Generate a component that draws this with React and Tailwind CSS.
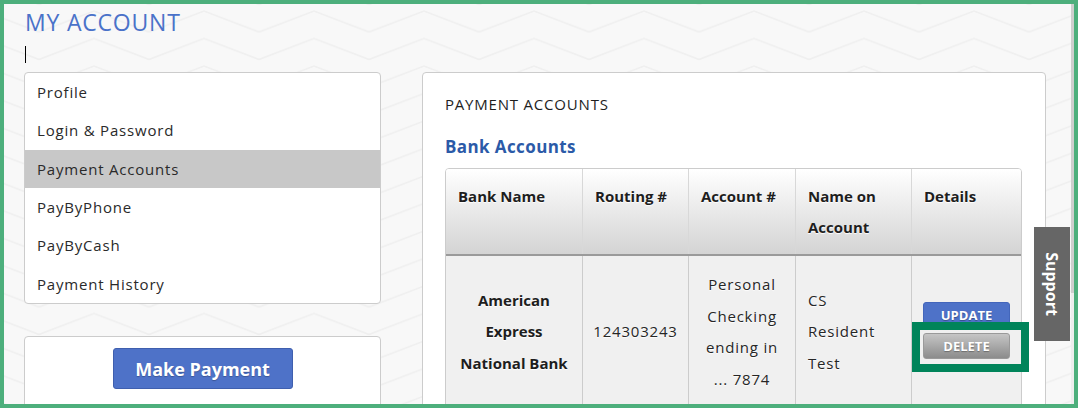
import React from "react";

const menu = ["Profile", "Login & Password", "Payment Accounts", "PayByPhone", "PayByCash", "Payment History"];

function Background() {
  return (
    <svg className="absolute inset-0 w-full h-full" aria-hidden="true">
      <defs>
        <pattern id="zig" x="35" y="4" width="110" height="27.5" patternUnits="userSpaceOnUse">
          <path d="M0 24 L55 3 L110 24" fill="none" stroke="#efefef" strokeWidth="1.5" />
        </pattern>
      </defs>
      <rect width="100%" height="100%" fill="url(#zig)" />
    </svg>
  );
}

export default function App() {
  const sh = "[text-shadow:0_1px_1px_#ffffff]";
  return (
    <div className="relative w-[1078px] h-[408px] overflow-hidden border-4 border-[#4daf7c] bg-[#f8f8f8] font-['Open_Sans',sans-serif] text-[#262626]">
      <Background />
      <div className="relative pl-[20px]">
        <h1 className="mt-[4px] ml-[1px] leading-[28px] text-[23px] font-normal tracking-[0.8px] text-[#4a72c9]">MY ACCOUNT</h1>
        <div className="ml-[1px] mt-[10px] h-[17px] w-px bg-black" />
        <div className="mt-[9px] flex gap-[41px]">
          <div className="w-[357px] flex flex-col">
            <div className="bg-white border border-[#cccccc] rounded-[4px] h-[232px] overflow-hidden">
              {menu.map((m) => (
                <div
                  key={m}
                  className={
                    "h-[38.33px] flex items-center pl-[12px] text-[15px] tracking-[0.8px] text-[#2a2a2a] " +
                    (m === "Payment Accounts" ? "bg-[#c8c8c8]" : "")
                  }
                >
                  {m}
                </div>
              ))}
            </div>
            <div className="mt-[32px] bg-white border border-[#cccccc] rounded-[4px] h-[90px] flex justify-center pt-[11px]">
              <button className={"w-[180px] h-[41px] bg-[#4e72c8] border border-[#3f5fae] rounded-[3px] text-white font-bold text-[18px] leading-none pt-[1px] [text-shadow:0_1px_1px_rgba(0,0,0,0.25)]"}>
                Make Payment
              </button>
            </div>
          </div>
          <div className="w-[624px] h-[360px] bg-white border border-[#cccccc] rounded-[4px] pt-[20px] px-[22px]">
            <div className="leading-[22px] text-[15px] tracking-[0.8px] text-[#1e1e1e]">PAYMENT ACCOUNTS</div>
            <div className="mt-[20px] leading-[24px] text-[17px] font-bold tracking-[0.4px] text-[#2b5aa8]">Bank Accounts</div>
            <div className="mt-[9px] w-[577px] border border-[#cccccc] rounded-t-[4px] overflow-hidden">
              <div className="grid grid-cols-[136px_106px_107px_116px_110px] bg-gradient-to-b from-white to-[#d4d4d4] border-b-2 border-[#9a9a9a] h-[87px]">
                {["Bank Name", "Routing #", "Account #", "Name on Account", "Details"].map((h, i) => (
                  <div
                    key={h}
                    className={
                      "pt-[12px] px-[12px] text-[15px] font-bold leading-[31px] text-[#1e1e1e] " + sh + " " +
                      (i > 0 ? "border-l border-[#d8d8d8]" : "")
                    }
                  >
                    {h}
                  </div>
                ))}
              </div>
              <div className="grid grid-cols-[136px_106px_107px_116px_110px] bg-[#f0f0f0] h-[152px] text-[15px] leading-[31.5px] text-[#262626]">
                <div className={"flex items-center justify-center text-center px-[8px] font-bold text-[#1e1e1e] " + sh}>
                  <div>American<br />Express<br />National Bank</div>
                </div>
                <div className={"flex items-center justify-center border-l border-[#cccccc] tracking-[0.8px] " + sh}>124303243</div>
                <div className={"flex items-center justify-center text-center border-l border-[#cccccc] tracking-[0.8px] " + sh}>
                  <div>Personal<br />Checking<br />ending in<br />... 7874</div>
                </div>
                <div className={"flex items-center border-l border-[#cccccc] px-[12px] tracking-[0.8px] " + sh}>
                  <div>CS<br />Resident<br />Test</div>
                </div>
                <div className="flex flex-col justify-center border-l border-[#cccccc] pl-[11px] gap-[5px] pb-[3px]">
                  <div className="w-[87px] h-[26px] bg-[#4e72c8] border border-[#4366bb] rounded-[3px] flex items-center justify-center text-white font-bold text-[13px] leading-none [text-shadow:0_1px_1px_rgba(0,0,0,0.3)]">UPDATE</div>
                  <div className="w-[87px] h-[26px] bg-gradient-to-b from-[#c6c6c6] to-[#8c8c8c] border border-[#9a9a9a] rounded-[3px] flex items-center justify-center text-white font-bold text-[13px] leading-none [text-shadow:0_1px_1px_rgba(0,0,0,0.3)]">DELETE</div>
                </div>
              </div>
            </div>
          </div>
        </div>
      </div>

      {/* annotation highlight */}
      <div className="absolute left-[908px] top-[318px] w-[117px] h-[50px] border-[8px] border-[#00845a]" />

      {/* support tab */}
      <div className="absolute left-[1030px] top-[223px] w-[36px] h-[114px] bg-[#666666] flex items-center justify-center">
        <span className="rotate-90 text-white font-bold text-[16px] whitespace-nowrap">Support</span>
      </div>

      {/* scrollbar strip */}
      <div className="absolute right-0 top-0 w-[3px] h-full bg-[#eeeeee]">
        <div className="h-[289px] bg-[#cfcfcf]" />
      </div>
    </div>
  );
}
